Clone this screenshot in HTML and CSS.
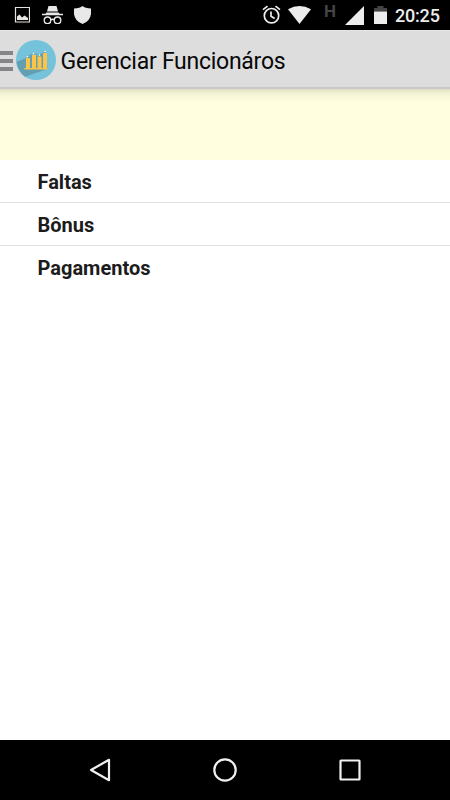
FILE: index.html
```html
<!DOCTYPE html>
<html lang="pt-BR">
<head>
<meta charset="utf-8">
<title>Gerenciar Funcionáros</title>
<link rel="stylesheet" href="styles.css">
</head>
<body>
<div class="screen">
  <header class="status">
    <svg class="picture" width="16" height="18" viewBox="0 0 16 18"><path d="M1.500 1.500h14v14.500h-14z" fill="none" stroke="#e5e3df" stroke-width="1.200"/><path d="M3 14v-3.500L5.500 8.500 8 11.500 10.500 9.500 14 12v2z" fill="#e8e6e2"/></svg>
    <svg class="spy" width="21" height="18" viewBox="0 0 21 18"><path d="M6.500 0h8l1.500 5.500H5z M4.500 6.500h12l1 1.200H21v1.500H0V7.700h3.500z" fill="#e8e8e8"/><g fill="none" stroke="#e8e8e8" stroke-width="1.400"><circle cx="5.500" cy="14.300" r="3.300"/><circle cx="15.500" cy="14.300" r="3.300"/><path d="M8.500 14q2-1.500 4 0"/></g></svg>
    <svg class="shield" width="17" height="18" viewBox="0 0 17 18"><path d="M8.500 0Q11 2 17 2.500V8Q16 15.500 8.500 18 1 15.500 0 8V2.500Q6 2 8.500 0z" fill="#e8e8e8"/></svg>
    <svg class="alarm" width="19" height="19" viewBox="0 0 19 19"><g fill="none" stroke="#ededed" stroke-width="1.700"><circle cx="9.500" cy="10.700" r="7.200"/><path d="M9 6.500v4.800l3.700 2.200M1 4.700l4.500-3.600M18 4.700l-4.500-3.600"/></g></svg>
    <svg class="wifi" width="23" height="18" viewBox="0 0 23 18"><path d="M0 3.200Q11.500-3.200 23 3.200L11.500 18z" fill="#ededed"/></svg>
    <span class="network">H</span>
    <svg class="signal" width="19" height="19" viewBox="0 0 19 19"><path d="M19 0v19H0z" fill="#ededed"/></svg>
    <svg class="battery" width="13" height="19" viewBox="0 0 13 19"><path d="M0 2h3.500V0h6v2H13v3.500H0z" fill="#444"/><path d="M0 5.500h13V18H0z" fill="#ededed"/></svg>
    <time class="clock">20:25</time>
  </header>
  <div class="appbar">
    <div class="menu"><i></i><i></i><i></i></div>
    <svg class="logo" width="40" height="40" viewBox="0 0 40 40"><circle cx="20" cy="20" r="20" fill="#75c3da"/><path d="M.500 22L10 18l6-3 6 1 8-4 1.500 17L9 36.800Q2 31 .500 22z" fill="#629fb0"/><path d="M8.500 28h23v1.500h-23zM10 18h4v10h-4zM16 15h4v13h-4zM21.500 16.500h4V28h-4zM27 13h4v15h-4z" fill="#fcc446"/><path d="M11.500 16.500l6-3 6 1.500 5.500-3.500" fill="none" stroke="#5d7e91" stroke-width=".6"/><g fill="#fff"><circle cx="11.500" cy="16.500" r=".8"/><circle cx="17.500" cy="13.500" r=".8"/><circle cx="23.500" cy="15" r=".8"/><circle cx="29" cy="11.500" r=".8"/></g></svg>
    <h1>Gerenciar Funcionáros</h1>
  </div>
  <main>
    <div class="banner"></div>
    <ul><li>Faltas</li><li>Bônus</li><li>Pagamentos</li></ul>
  </main>
  <nav>
    <svg width="26" height="26" viewBox="0 0 26 26"><path d="M4 13L22 2.800v20.400z"/></svg>
    <svg width="26" height="26" viewBox="0 0 26 26"><circle cx="13" cy="13" r="10.700"/></svg>
    <svg width="26" height="26" viewBox="0 0 26 26"><rect x="3.500" y="3.500" width="19" height="19" rx=".5"/></svg>
  </nav>
</div>
</body>
</html>
```
FILE: styles.css
```css
* { box-sizing: border-box; }
body { margin: 0; font-family: Roboto, sans-serif; background: #fff; }
.screen { width: 450px; height: 800px; display: flex; flex-direction: column; overflow: hidden; }
svg { display: block; flex: none; }
.status { height: 30px; flex: none; background: #000; display: flex; align-items: flex-start; padding: 6px 0 0 14px; }
.spy { margin-left: 12px; }
.shield { margin-left: 11px; }
.alarm { margin: -1px 0 0 171px; }
.wifi { margin-left: 7px; }
.network { width: 11px; margin: -5px 0 0 13px; font-size: 17px; line-height: 20px; font-weight: 700; color: #444; }
.signal { margin-left: 10px; }
.battery { margin-left: 10px; }
.clock { margin: -1px 0 0 8px; color: #ededed; font-size: 18px; line-height: 22px; font-weight: 500; letter-spacing: -.2px; }
.appbar { height: 59px; flex: none; display: flex; align-items: center; padding-top: 2px; background: #ddd; border-top: 1px solid #e5e5e5; border-bottom: 2px solid #c9c9c9; }
.menu { width: 13px; margin: 1px 2.500px 0 0; display: flex; flex-direction: column; gap: 4px; }
.menu i { height: 4px; background: #858589; }
h1 { margin: 4px 0 0 5px; font-size: 23px; line-height: 30px; font-weight: 400; letter-spacing: -.26px; color: #080808; white-space: nowrap; }
main { flex: 1; background: #fff; }
.banner { height: 71px; background: linear-gradient(#dedec3 0, #ededd0 3px, #f9f9da 8px, #ffffdf 15px); }
ul { list-style: none; margin: 0; padding: 0; }
li { height: 43px; padding-left: 37.500px; font-size: 20px; line-height: 44px; font-weight: 700; color: #1c1c1c; border-bottom: 1px solid #e0e0e0; }
li:last-child { border: 0; }
nav { height: 60px; flex: none; display: flex; justify-content: center; align-items: center; gap: 99px; background: #000; }
nav svg { fill: none; stroke: #f0f0f0; stroke-width: 2.200; stroke-linejoin: round; }
```
